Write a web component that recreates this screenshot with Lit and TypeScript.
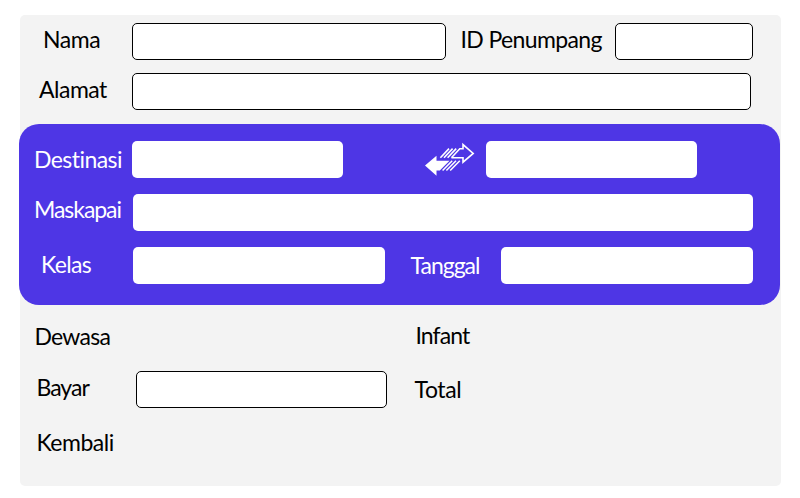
import { LitElement, html, css } from "lit";
import { customElement } from "lit/decorators.js";

@customElement("swap-icon")
export class SwapIcon extends LitElement {
  static styles = css`
    :host { display: block; width: 50px; height: 36px; }
    svg { display: block; }
  `;
  render() {
    return html`<svg width="50" height="36" viewBox="0 0 50 36" fill="none" stroke="#fff">
      <path fill="#fff" stroke="none" d="M0 23.5 11.5 13.8V18.7H24.5L14.8 28.6H11.5V33.8Z" />
      <path stroke-width="1.6" d="M26.4 15.8 34.8 6.8H38V2.6L48.2 11.4 38 20.2V15.8H26.4" />
      <path stroke-width="1.6" d="M15.4 15.8 24 6.6M19 15.8 27.6 6.6M22.6 15.8 31.2 6.6" />
      <path stroke-width="1.5" d="M17.6 28.6 27.2 18.7M21.4 28.6 31 18.7M25.2 28.6 34.8 18.7" />
    </svg>`;
  }
}

@customElement("app-root")
export class AppRoot extends LitElement {
  static styles = css`
    :host {
      display: block;
      box-sizing: border-box;
      width: 800px;
      height: 498px;
      padding: 15px 19px 12px 20px;
      background: #fff;
      color: #000;
      font: 23px/28px "Gill Sans", "Gill Sans MT", Lato, sans-serif;
    }
    .panel {
      box-sizing: border-box;
      height: 471px;
      padding-top: 8px;
      border-radius: 5px;
      background: #f3f3f3;
    }
    .row { display: flex; height: 37px; align-items: flex-start; }
    .row + .row { margin-top: 13px; }
    .trip {
      box-sizing: border-box;
      width: 761px;
      height: 181px;
      margin: 14px 0 0 -1px;
      padding-top: 17px;
      border-radius: 20px;
      background: #4e36e5;
      color: #fff;
    }
    .trip .row + .row { margin-top: 16px; }
    .label { flex: none; box-sizing: border-box; white-space: nowrap; height: 28px; }
    .field {
      flex: none;
      box-sizing: border-box;
      height: 37px;
      border: 1px solid #000;
      border-radius: 5px;
      background: #fff;
    }
    .trip .field { border: 0; }
    .nama { width: 112px; padding-left: 23px; margin-top: 2px; letter-spacing: -0.4px; }
    .id { width: 169px; padding-left: 14.5px; margin-top: 2px; letter-spacing: -0.62px; }
    .alamat { width: 112px; padding-left: 19px; margin-top: 2px; letter-spacing: -0.5px; }
    .destinasi { width: 113px; padding-left: 15px; margin-top: 4px; letter-spacing: -0.55px; }
    .maskapai { width: 114px; padding-left: 15px; margin-top: 1px; letter-spacing: -1.05px; }
    .kelas { width: 114px; padding-left: 22px; margin-top: 3px; letter-spacing: -0.65px; }
    .tanggal { width: 116px; padding-left: 25.5px; margin-top: 4px; letter-spacing: -1px; }
    .w314 { width: 314px; }
    .w138 { width: 138px; }
    .w619 { width: 619px; }
    .w211 { width: 211px; }
    .w620 { width: 620px; }
    .w252 { width: 252px; }
    .w251 { width: 251px; }
    .swap { margin: 1px 11px 0 82px; }
    .passengers { margin-top: 14px; }
    .dewasa { width: 381px; padding-left: 14.5px; margin-top: 3px; letter-spacing: -0.75px; }
    .infant { padding-left: 14.5px; margin-top: 2px; letter-spacing: -0.9px; }
    .row.payment { margin-top: 15px; }
    .bayar { width: 116px; padding-left: 16.5px; margin-top: 2px; letter-spacing: -1px; }
    .total { padding-left: 27.5px; margin-top: 4px; letter-spacing: -0.4px; }
    .row.change { margin-top: 16px; }
    .kembali { padding-left: 16.5px; margin-top: 4px; letter-spacing: -0.5px; }
  `;

  render() {
    return html`<main class="panel">
      <div class="row">
        <span class="label nama">Nama</span><div class="field w314"></div>
        <span class="label id">ID Penumpang</span><div class="field w138"></div>
      </div>
      <div class="row">
        <span class="label alamat">Alamat</span><div class="field w619"></div>
      </div>
      <section class="trip">
        <div class="row">
          <span class="label destinasi">Destinasi</span><div class="field w211"></div>
          <swap-icon class="swap"></swap-icon><div class="field w211"></div>
        </div>
        <div class="row">
          <span class="label maskapai">Maskapai</span><div class="field w620"></div>
        </div>
        <div class="row">
          <span class="label kelas">Kelas</span><div class="field w252"></div>
          <span class="label tanggal">Tanggal</span><div class="field w252"></div>
        </div>
      </section>
      <div class="row passengers">
        <span class="label dewasa">Dewasa</span><span class="label infant">Infant</span>
      </div>
      <div class="row payment">
        <span class="label bayar">Bayar</span><div class="field w251"></div>
        <span class="label total">Total</span>
      </div>
      <div class="row change"><span class="label kembali">Kembali</span></div>
    </main>`;
  }
}
